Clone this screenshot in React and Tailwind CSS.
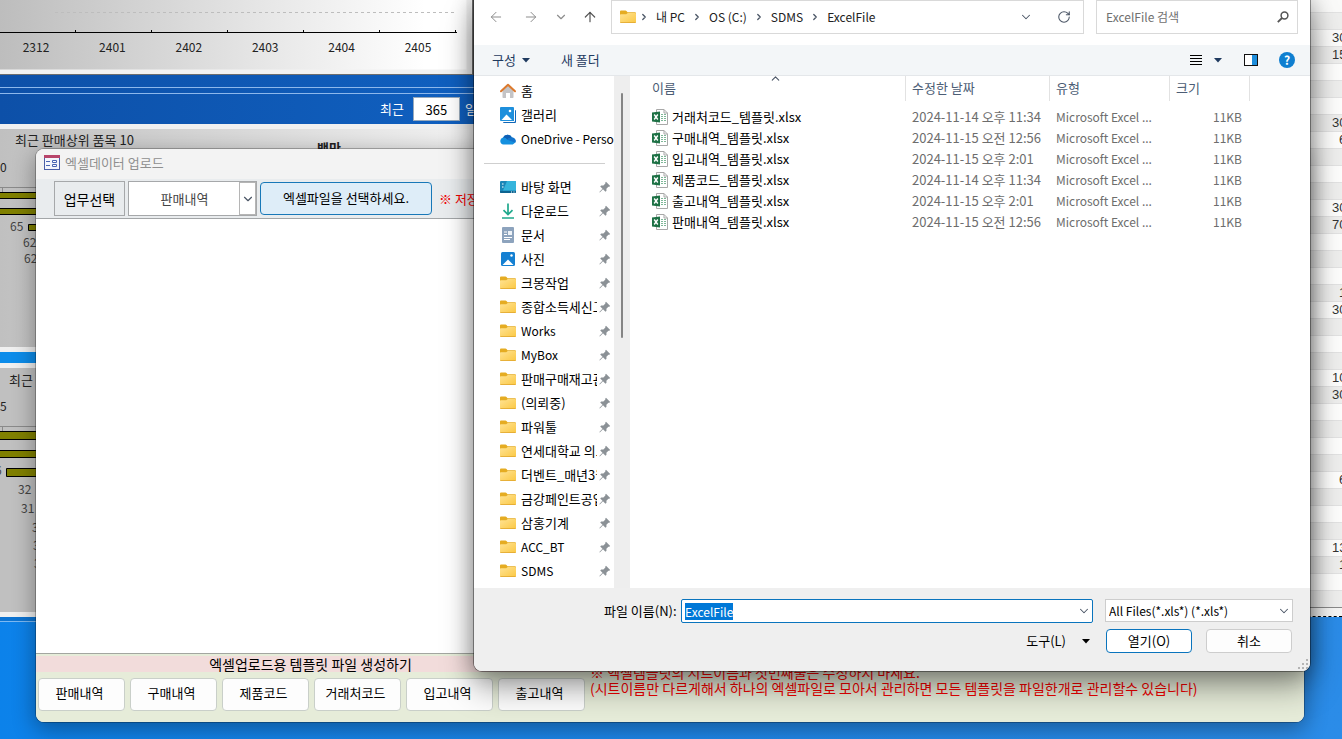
import { useEffect, useRef } from "react"
import { ArrowLeft, ArrowRight, ArrowUp, ChevronDown, ChevronRight, ChevronUp, RotateCw } from "lucide-react"

const months = ["2312", "2401", "2402", "2403", "2404", "2405"]

const sheetValues = {
  1: "30", 2: "15", 6: "30", 7: "6", 11: "30", 12: "70", 16: "1",
  17: "30", 21: "10", 22: "30", 27: "6", 31: "13", 32: "1",
}

const pinned = [
  { name: "바탕 화면", icon: "desktop" },
  { name: "다운로드", icon: "download" },
  { name: "문서", icon: "document" },
  { name: "사진", icon: "picture" },
  { name: "크몽작업" },
  { name: "종합소득세신고" },
  { name: "Works" },
  { name: "MyBox" },
  { name: "판매구매재고관리" },
  { name: "(의뢰중)" },
  { name: "파워툴" },
  { name: "연세대학교 의료원" },
  { name: "더벤트_매년3월" },
  { name: "금강페인트공업" },
  { name: "삼홍기계" },
  { name: "ACC_BT" },
  { name: "SDMS" },
]

const files = [
  { name: "거래처코드_템플릿.xlsx", date: "2024-11-14 오후 11:34" },
  { name: "구매내역_템플릿.xlsx", date: "2024-11-15 오전 12:56" },
  { name: "입고내역_템플릿.xlsx", date: "2024-11-15 오후 2:01" },
  { name: "제품코드_템플릿.xlsx", date: "2024-11-14 오후 11:34" },
  { name: "출고내역_템플릿.xlsx", date: "2024-11-15 오후 2:01" },
  { name: "판매내역_템플릿.xlsx", date: "2024-11-15 오전 12:56" },
]

const templates = ["판매내역", "구매내역", "제품코드", "거래처코드", "입고내역", "출고내역"]

const FolderIcon = () => (
  <svg width="16" height="14" viewBox="0 0 16 14" className="shrink-0">
    <defs>
      <linearGradient id="folder" x1="0" y1="0" x2="1" y2="1">
        <stop offset="0" stopColor="#ffe394" />
        <stop offset="1" stopColor="#fbc843" />
      </linearGradient>
    </defs>
    <path d="M0 1.500Q0 .5 1 .5h4.500q.6 0 1 .5l1 1.200H15q1 0 1 1V7H0z" fill="#e5ac22" />
    <path d="M0 5Q0 4.200.8 4.200h5.400l1.600-1.200H15q1 0 1 1v8q0 1-1 1H1q-1 0-1-1z" fill="url(#folder)" />
    <path d="M0 12.200q.1.800 1 .8h14q.9 0 1-.8z" fill="#dfa52c" />
  </svg>
)

const HomeIcon = () => (
  <svg width="16" height="16" viewBox="0 0 16 16" className="shrink-0">
    <path d="M2.500 7 8 2l5.500 5v7.200q0 .8-.8.8H10v-5H6v5H3.300q-.8 0-.8-.8z" fill="#c4c4c6" />
    <path d="M1 8.300 8 1.800l7 6.500" fill="none" stroke="#dc7a2e" strokeWidth="2" strokeLinecap="round" strokeLinejoin="round" />
  </svg>
)

const GalleryIcon = () => (
  <svg width="16" height="16" viewBox="0 0 16 16" className="shrink-0">
    <path d="M3 3h12q1 0 1 1v11q0 1-1 1H4q-1 0-1-1z" fill="#1067b8" />
    <rect width="14" height="14" rx="1" fill="#1e8fdc" />
    <path d="M14.500 2v12.500H2" fill="none" stroke="#fff" strokeWidth="1" />
    <path d="M1.500 13 6.500 7.500l5.500 5.500z" fill="#fff" />
    <circle cx="10" cy="4" r="1.300" fill="#fff" />
  </svg>
)

const PictureIcon = () => (
  <svg width="16" height="16" viewBox="0 0 16 16" className="shrink-0">
    <rect x="1" y="1" width="14" height="14" rx="1.500" fill="#1580d2" />
    <path d="M2.500 14 8 8.500l5.500 5.500z" fill="#fff" />
    <circle cx="11.500" cy="4.500" r="1.200" fill="#fff" />
  </svg>
)

const CloudIcon = () => (
  <svg width="16" height="16" viewBox="0 0 16 16" className="shrink-0">
    <path d="M3.500 13.500A3.500 3.500 0 0 1 3 6.600 5 5 0 0 1 12 6.500a3.600 3.600 0 0 1 .8 7z" fill="#1490df" />
    <path d="M3 6.600A5 5 0 0 1 12 6.500q-3 0-4.500 2.200Q5.500 6.300 3 6.600z" fill="#0f5fb5" />
    <path d="M7.500 8.700Q9 6.500 12 6.500a3.600 3.600 0 0 1 3.400 5.300z" fill="#1273cc" />
  </svg>
)

const DesktopIcon = () => (
  <svg width="16" height="16" viewBox="0 0 16 16" className="shrink-0">
    <rect y="2" width="16" height="12" rx="1" fill="#1b86b8" />
    <path d="M7 2h8q1 0 1 1v8.500H3z" fill="#35b4dc" />
    <path d="M0 12h16v1q0 1-1 1H1q-1 0-1-1z" fill="#0d6390" />
    <path d="M2 5h1.500M2 8h1.500M11 13h1M13.500 13h1" stroke="#fff" strokeWidth="1" />
  </svg>
)

const DownloadIcon = () => (
  <svg width="16" height="16" viewBox="0 0 16 16" className="shrink-0">
    <path d="M8 .5v11M3.500 7.200 8 11.600l4.500-4.400M2 15h12" fill="none" stroke="#1fa88c" strokeWidth="1.700" />
  </svg>
)

const DocumentIcon = () => (
  <svg width="16" height="16" viewBox="0 0 16 16" className="shrink-0">
    <rect x="2" y="0" width="12" height="16" rx="1" fill="#8da3bd" />
    <path d="M4 5h3M4 7.500h3M4 10.500h8M4 12.500h6" stroke="#fff" strokeWidth="1" />
    <rect x="8" y="4" width="4" height="4" fill="#eef3f8" />
  </svg>
)

const PinIcon = () => (
  <svg width="12" height="12" viewBox="0 0 12 12" className="-ml-[3px] shrink-0">
    <path d="M7 .8 11.200 5l-1 .8-.8-.1-2 2 .1 2-1 1L4 8.300.8 11.500l-.4-.4L3.500 7.800 1.200 5.500l1-1 2.200.1 2-2-.2-.9z" fill="#8b9196" />
  </svg>
)

const ExcelIcon = () => (
  <svg width="16" height="16" viewBox="0 0 16 16" className="shrink-0">
    <path d="M4.500.5h7.500l3.500 3.500v11.500h-11z" fill="#fff" stroke="#a8a8a8" />
    <path d="M12 .5V4h3.500" fill="none" stroke="#a8a8a8" />
    <path d="M9 5.500h2M12 5.500h2M9 7.500h2M12 7.500h2M9 9.500h2M12 9.500h2M9 11.500h2M12 11.500h2" stroke="#7fb798" />
    <path d="M0 3.500 8 2.500v11l-8-1z" fill="#1d7145" />
    <path d="m2.200 5.500 3.600 5m0-5-3.600 5" stroke="#fff" strokeWidth="1.400" />
  </svg>
)

const FormIcon = () => (
  <svg width="16" height="16" viewBox="0 0 16 16" className="shrink-0">
    <rect x=".5" y=".5" width="15" height="14" fill="#f4f6fc" stroke="#4a5fa8" />
    <rect width="16" height="3" fill="#b8456b" />
    <path d="M2 6.500h4M2 10.500h4" stroke="#4a66b4" />
    <path d="M8.500 5.500h4v2h-4zM8.500 9.500h4v2h-4z" fill="#fff" stroke="#4a66b4" />
  </svg>
)

const SearchIcon = () => (
  <svg width="12" height="12" viewBox="0 0 12 12" className="shrink-0">
    <circle cx="7.500" cy="4.500" r="3.400" fill="none" stroke="#555" strokeWidth="1.500" />
    <path d="M5 7 .8 11.200" stroke="#555" strokeWidth="1.800" />
  </svg>
)

const Caret = () => (
  <svg width="8" height="5" viewBox="0 0 8 5" className="shrink-0">
    <path d="M0 0h8L4 4.500z" fill="currentColor" />
  </svg>
)

const icons = {
  desktop: <DesktopIcon />,
  download: <DownloadIcon />,
  document: <DocumentIcon />,
  picture: <PictureIcon />,
}

const Crumb = ({ children }) => (
  <>
    <ChevronRight size={10} strokeWidth={3} className="mx-[3px] shrink-0 text-gray-600" />
    <a href="#" className="px-1 whitespace-nowrap">{children}</a>
  </>
)

const SalesCharts = () => (
  <div className="w-[474px] shrink-0">
    <section className="h-[75px] border-r-2 border-b border-[#6e6e6e] bg-linear-to-r from-[#bdbdbd] via-[#e6e6e6] via-55% to-white to-90%">
      <svg width="472" height="74" viewBox="0 0 472 74" className="block" fontSize="12" textAnchor="middle">
        <path d="M0 72h469V0" fill="none" stroke="#f2f2f2" strokeWidth="5" />
        <path d="M0 12.500h2M55 12.500h400" stroke="#bdbdbd" strokeDasharray="3 3" />
        <path d="M0 32.500h457" stroke="#000" />
        {months.map((month, i) => (
          <g key={month}>
            <path d={`M${75.5 + i * 76} 30v3`} stroke="#000" />
            <text x={36 + i * 76.400} y="52" fill="#222">{month}</text>
          </g>
        ))}
      </svg>
    </section>

    <header className="flex h-[49px] flex-col bg-linear-to-r from-[#0d50a8] to-[#1060c0]">
      <div className="mt-3 h-[7px] shrink-0 border-y border-[#8db8ec]" />
      <div className="flex items-center gap-[9px] pt-[3px] pl-[380px] text-white">
        <label htmlFor="days" className="shrink-0">최근</label>
        <input id="days" defaultValue="365" className="h-6 w-[47px] shrink-0 border border-[#9ab] bg-white text-center text-black" />
        <span className="-ml-1 whitespace-nowrap">일</span>
      </div>
    </header>

    <section className="h-[228px] border-y-[5px] border-r-[5px] border-[#f0f0f0] bg-linear-to-r from-[#c0c0c0] to-[#f2f2f2]">
      <svg width="469" height="218" viewBox="0 129 469 218" className="block" fontSize="12" fill="#444">
        <text x="15" y="145" fontSize="13" fill="#222">최근 판매상위 품목 10</text>
        <text x="317" y="153" fontSize="13" fontWeight="700" fill="#222">백만</text>
        <text x="0" y="172" fill="#222">0</text>
        <path d="M0 187.500h60M2.500 188v4" stroke="#8a8a8a" />
        <path d="M-2 192.500h60v6h-60zM-2 208.500h60v6h-60zM28.500 224.500h30v6h-30z" fill="#808000" stroke="#000" />
        <text x="10" y="231">65</text>
        <text x="23" y="247">62</text>
        <text x="24" y="263">62</text>
      </svg>
    </section>

    <div className="h-[11px] bg-[#0c8cea]" />

    <section className="h-[254px] border-y-[5px] border-[#f0f0f0] bg-[#c0c0c0]">
      <svg width="469" height="244" viewBox="0 368 469 244" className="block" fontSize="12" fill="#444">
        <text x="9" y="385" fontSize="13" fill="#222">최근</text>
        <text x="0" y="411" fill="#222">5</text>
        <path d="M0 426.500h60M2.500 427v4" stroke="#8a8a8a" />
        <path d="M-2 431.500h60v8h-60zM-2 450.500h60v7h-60zM6.500 468.500h60v8h-60z" fill="#808000" stroke="#000" />
        <text x="-5" y="475">6</text>
        <text x="18" y="494">32</text>
        <text x="21" y="513">31</text>
        <text x="32" y="532">3</text>
        <text x="33" y="550">3</text>
        <text x="34" y="568">3</text>
      </svg>
    </section>
    <div className="h-[5px] border-b border-[#7db9f2] bg-[#0d74d2]" />
  </div>
)

const SheetEdge = () => (
  <div className="ml-auto w-10 shrink-0 overflow-hidden font-['Liberation_Sans',sans-serif] text-[13px] leading-4 text-[#333]">
    <div className="h-3 bg-[#fafaf9]" />
    {Array.from({ length: 35 }, (_, i) => (
      <div
        key={i}
        className={
          i % 2
            ? "flex h-[17px] justify-end border-t border-[#e2e2e2] bg-[#fdfdfc]"
            : "flex h-[17px] justify-end border-t border-[#e2e2e2] bg-[#eeeeed]"
        }
      >
        <span className={sheetValues[i]?.length === 1 ? "w-[3px]" : "w-[10px]"}>{sheetValues[i]}</span>
      </div>
    ))}
    <div className="h-[10px] border-b border-dashed border-black bg-[#f6f6f5] shadow-[inset_0_1px_0_#8a8a8a]" />
  </div>
)

const UploadWindow = () => (
  <main className="absolute top-[149px] right-[38px] bottom-[17px] left-9 flex flex-col overflow-hidden rounded-lg bg-white shadow-[0_0_0_1px_#00000040,0_6px_22px_2px_#00000055]">
    <div className="flex h-[30px] shrink-0 items-center gap-[5px] bg-[#f3f3f3] px-2 pb-0.5 text-[#8f8f8f]">
      <FormIcon />
      <h1>엑셀데이터 업로드</h1>
    </div>

    <div className="flex h-10 shrink-0 items-center gap-[3px] border-b border-[#a3a6a8] bg-[#e9ecee] pl-[18px]">
      <label htmlFor="task" className="flex h-[35px] w-[71px] shrink-0 items-center justify-center border border-[#a6a8aa] text-sm">
        업무선택
      </label>
      <div className="relative h-[35px] w-[129px] shrink-0">
        <select id="task" className="size-full appearance-none border border-[#a6a8aa] bg-white pr-4 text-center text-[#444] [text-align-last:center]">
          <option>판매내역</option>
          <option>구매내역</option>
        </select>
        <span className="pointer-events-none absolute top-px right-px flex h-[33px] w-[17px] items-center justify-center border border-[#b5b5b5] bg-white">
          <ChevronDown size={14} strokeWidth={2} className="shrink-0 text-gray-600" />
        </span>
      </div>
      <button className="h-[33px] w-[172px] shrink-0 rounded border border-[#1878b8] bg-[#deedf8] pb-0.5">
        엑셀파일을 선택하세요.
      </button>
      <p className="pl-1 whitespace-nowrap text-[#f00000]">※ 저장</p>
    </div>

    <div className="flex-1" />

    <footer className="flex shrink-0 flex-col border-t border-[#a3a6a0] bg-[#e6ecd9] pb-[11px]">
      <h2 className="mt-0.5 mb-1.5 w-[549px] bg-[#f2dcdb] text-center text-sm leading-4">
        엑셀업로드용 템플릿 파일 생성하기
      </h2>
      <div className="flex items-start gap-[5px] pl-0.5">
        {templates.map((name) => (
          <button key={name} className="h-[33px] w-[87px] shrink-0 rounded border border-[#c9cfc9] bg-[#fdfdfd] pr-1 pb-1">
            {name}
          </button>
        ))}
        <p className="-mt-3.5 text-sm leading-4 whitespace-nowrap text-[#f00000]">
          ※ 엑셀템플릿의 시트이름과 첫번째줄은 수정하지 마세요.
          <br />
          (시트이름만 다르게해서 하나의 엑셀파일로 모아서 관리하면 모든 템플릿을 파일한개로 관리할수 있습니다)
        </p>
      </div>
    </footer>
  </main>
)

const Places = () => (
  <nav className="w-[140px] shrink-0 overflow-hidden pt-[3px] pl-[26px]">
    <ul>
      <li className="flex h-6 items-center gap-[5px]"><HomeIcon />홈</li>
      <li className="flex h-6 items-center gap-[5px]"><GalleryIcon />갤러리</li>
      <li className="flex h-6 items-center gap-[5px] text-xs whitespace-nowrap"><CloudIcon />OneDrive - Personal</li>
    </ul>
    <hr className="mt-3 mr-[9px] mb-[11px] -ml-4 border-[#cfcfcf]" />
    <ul className="pr-[3px]">
      {pinned.map((place) => (
        <li key={place.name} className="flex h-6 items-center gap-[5px]">
          {icons[place.icon] || <FolderIcon />}
          <span className={/[가-힣]/.test(place.name) ? "flex-1 overflow-hidden whitespace-nowrap" : "flex-1 text-xs"}>
            {place.name}
          </span>
          <PinIcon />
        </li>
      ))}
    </ul>
  </nav>
)

const FileTable = () => (
  <div className="relative min-w-0 flex-1">
    <ChevronUp size={13} strokeWidth={2} className="absolute -top-1 left-[139px] text-gray-600" />
    <table className="w-full table-fixed border-collapse whitespace-nowrap">
      <colgroup>
        <col className="w-[276px]" />
        <col className="w-36" />
        <col className="w-[120px]" />
        <col className="w-20" />
        <col />
      </colgroup>
      <thead>
        <tr className="h-[30px] text-left align-top text-[#4c5d75]">
          {["이름", "수정한 날짜", "유형", "크기"].map((title, i) => (
            <th key={title} scope="col" className="p-0 font-normal">
              <div className={i === 0 ? "h-[25px] border-r border-[#e2e2e2] pl-[22px] leading-6" : "h-[25px] border-r border-[#e2e2e2] pl-1.5 leading-6"}>
                {title}
              </div>
            </th>
          ))}
          <td />
        </tr>
      </thead>
      <tbody>
        {files.map((file) => (
          <tr key={file.name} className="h-[21px] text-[#6d6d6d]">
            <td className="p-0 pl-[22px] text-black">
              <span className="flex items-center gap-1"><ExcelIcon />{file.name}</span>
            </td>
            <td className="p-0 pl-1.5">{file.date}</td>
            <td className="p-0 pl-1.5 text-xs">Microsoft Excel ...</td>
            <td className="p-0 pr-2 text-right text-xs">11KB</td>
            <td />
          </tr>
        ))}
      </tbody>
    </table>
  </div>
)

const OpenDialog = () => {
  const fileName = useRef(null)

  useEffect(() => {
    fileName.current.focus()
    fileName.current.select()
  }, [])

  return (
    <div role="dialog" aria-label="열기" className="absolute top-0 right-8 bottom-[68px] left-[474px] flex flex-col overflow-hidden rounded-b-lg bg-white shadow-[0_0_0_1px_#00000060,0_0_20px_2px_#00000040,0_16px_32px_0_#00000060]">
      <div className="flex h-[45px] shrink-0 items-start pr-3 pl-3.5">
        <div className="flex h-[34px] w-[123px] shrink-0 items-center text-[#8d8d8d]">
          <button aria-label="뒤로"><ArrowLeft size={16} strokeWidth={1.5} /></button>
          <button aria-label="앞으로" className="ml-[19px]"><ArrowRight size={16} strokeWidth={1.5} /></button>
          <button aria-label="최근 위치" className="ml-[15px]"><ChevronDown size={14} strokeWidth={2} /></button>
          <button aria-label="위로" className="ml-3.5 text-[#555]"><ArrowUp size={16} strokeWidth={1.8} /></button>
        </div>
        <div className="flex h-[34px] min-w-0 flex-1 items-center border border-[#d9d9d9] pr-3 pl-2 text-xs text-[#222]">
          <FolderIcon />
          <Crumb>내 PC</Crumb>
          <Crumb>OS (C:)</Crumb>
          <Crumb>SDMS</Crumb>
          <Crumb>ExcelFile</Crumb>
          <ChevronDown size={14} strokeWidth={1.8} className="mr-6 ml-auto shrink-0 text-gray-600" />
          <RotateCw size={14} strokeWidth={1.8} className="shrink-0 text-gray-600" />
        </div>
        <label className="ml-3 flex h-[34px] w-[202px] shrink-0 items-center border border-[#d9d9d9] pr-2 pl-[9px]">
          <input aria-label="검색" placeholder="ExcelFile 검색" className="min-w-0 flex-1 text-xs outline-none placeholder:text-[#707070]" />
          <SearchIcon />
        </label>
      </div>

      <div className="flex h-[31px] shrink-0 items-center border-b border-[#e4e7ea] bg-[#f3f6f8] pr-[15px] pl-[18px] text-[#1f3a5f]">
        <button className="flex items-center gap-1.5">구성 <Caret /></button>
        <button className="ml-[31px]">새 폴더</button>
        <button aria-label="보기" className="ml-auto text-black">
          <svg width="12" height="11" viewBox="0 0 12 11"><path d="M0 .5h12M0 3.500h12M0 6.500h12M0 9.500h12" stroke="currentColor" /></svg>
        </button>
        <button aria-label="보기 옵션" className="ml-3"><Caret /></button>
        <button aria-label="미리 보기 창" className="ml-[22px]">
          <svg width="14" height="12" viewBox="0 0 14 12">
            <rect x=".5" y=".5" width="13" height="11" fill="#fff" stroke="#111" />
            <rect x="8" y="1" width="5" height="10" fill="#1d8ddb" />
          </svg>
        </button>
        <button aria-label="도움말" className="ml-[21px] size-4 rounded-full bg-[#0f7fd0] text-xs leading-4 font-bold text-white">?</button>
      </div>

      <div className="flex min-h-0 flex-1">
        <Places />
        <div className="w-4 shrink-0 bg-[#eeeeee] pt-[17px]">
          <div className="mx-auto h-[245px] w-0.5 rounded bg-[#858585]" />
        </div>
        <FileTable />
      </div>

      <div className="relative flex h-[83px] shrink-0 flex-col items-end gap-1.5 bg-[#efefef] pt-[11px] pr-[17px]">
        <div className="flex w-full items-start pl-[130px]">
          <label htmlFor="filename" className="w-[77px] shrink-0 leading-6 whitespace-nowrap">파일 이름(N):</label>
          <div className="relative h-6 min-w-0 flex-1">
            <input
              id="filename"
              ref={fileName}
              defaultValue="ExcelFile"
              className="size-full rounded-xs border border-[#0a74bd] bg-white px-[3px] text-xs outline-none selection:bg-[#0078d7] selection:text-white"
            />
            <ChevronDown size={14} strokeWidth={1.8} className="pointer-events-none absolute top-[5px] right-0.5 text-gray-600" />
          </div>
          <div className="relative ml-3 h-[23px] w-[188px] shrink-0">
            <select aria-label="파일 형식" className="size-full appearance-none border border-[#cdcdcd] bg-white px-[3px] text-xs">
              <option>All Files(*.xls*) (*.xls*)</option>
            </select>
            <ChevronDown size={14} strokeWidth={1.8} className="pointer-events-none absolute top-[5px] right-0.5 text-gray-600" />
          </div>
        </div>
        <div className="flex items-center pr-px">
          <button className="mr-4 flex items-center gap-4">도구(L) <Caret /></button>
          <button className="mr-3.5 h-6 w-[86px] rounded border border-[#0a74bd] bg-white pb-px">열기(O)</button>
          <button className="h-6 w-[86px] rounded border border-[#cdcdcd] bg-[#fdfdfd] pb-px">취소</button>
        </div>
        <svg width="10" height="10" viewBox="0 0 10 10" className="absolute right-0.5 bottom-0.5" fill="#b4b4b4">
          <path d="M8 0h2v2H8zM8 4h2v2H8zM8 8h2v2H8zM4 4h2v2H4zM4 8h2v2H4zM0 8h2v2H0z" />
        </svg>
      </div>
    </div>
  )
}

export default function App() {
  return (
    <div className="relative h-screen overflow-hidden bg-linear-to-r from-[#0c82ea] to-[#2b8ce8] font-['Noto_Sans_CJK_KR',sans-serif] text-[13px] leading-4 text-black">
      <div className="flex items-start">
        <SalesCharts />
        <SheetEdge />
      </div>
      <UploadWindow />
      <OpenDialog />
    </div>
  )
}
